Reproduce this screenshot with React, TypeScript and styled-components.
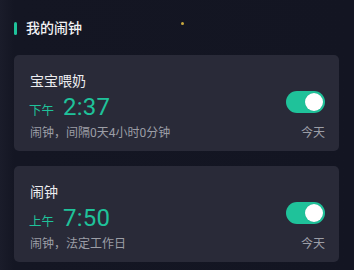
import React from "react";
import styled, { createGlobalStyle } from "styled-components";

const GlobalStyle = createGlobalStyle`
  html, body {
    margin: 0;
    padding: 0;
    background: #131522;
  }
  body {
    font-family: Roboto, "Noto Sans CJK SC", sans-serif;
    -webkit-font-smoothing: antialiased;
  }
`;

const Page = styled.div`
  width: 354px;
  height: 270px;
  overflow: hidden;
  background: linear-gradient(90deg, #1a1c2a 0px, #141623 14px, #131522 100%);
  box-sizing: border-box;
  padding: 17px 15px 0 14px;
`;

const Header = styled.div`
  position: relative;
  display: flex;
  align-items: center;
  height: 22px;
  margin-bottom: 16px;
`;

const Accent = styled.span`
  width: 3px;
  height: 13px;
  border-radius: 2px;
  background: #1fc29a;
  margin-right: 9px;
`;

const Title = styled.h2`
  margin: 0;
  font-size: 14px;
  line-height: 22px;
  font-weight: 500;
  color: #f2f2f4;
`;

const Dot = styled.span`
  position: absolute;
  left: 167px;
  top: 5px;
  width: 3px;
  height: 3px;
  border-radius: 50%;
  background: #c9a93e;
`;

const List = styled.div`
  display: flex;
  flex-direction: column;
  gap: 15px;
`;

const Card = styled.div`
  display: grid;
  grid-template-columns: 1fr auto;
  grid-template-rows: 22px 31px 18px;
  align-content: start;
  grid-template-areas:
    "name ."
    "time toggle"
    "sub day";
  height: 96px;
  box-sizing: border-box;
  padding: 15px 14px 0 16px;
  border-radius: 5px;
  background: #292a38;
`;

const Name = styled.div`
  grid-area: name;
  font-size: 14px;
  line-height: 22px;
  color: #ecedf0;
`;

const TimeRow = styled.div`
  grid-area: time;
  display: flex;
  align-items: baseline;
  margin-left: -1px;
  line-height: 30px;
  color: #1fc29a;
`;

const Period = styled.span`
  font-size: 12.5px;
  margin-right: 9px;
`;

const Clock = styled.span`
  font-size: 24px;
  font-weight: 400;
  letter-spacing: 0.2px;
`;

const Sub = styled.div`
  grid-area: sub;
  margin-top: 1px;
  font-size: 12px;
  line-height: 18px;
  color: #9c9ea6;
`;

const Day = styled.div`
  grid-area: day;
  justify-self: end;
  margin-top: 1px;
  font-size: 12px;
  line-height: 18px;
  color: #9c9ea6;
`;

const Toggle = styled.button<{ $on: boolean }>`
  grid-area: toggle;
  align-self: start;
  justify-self: end;
  position: relative;
  margin-top: -1px;
  width: 39px;
  height: 22px;
  padding: 0;
  border: none;
  border-radius: 11px;
  background: ${(p) => (p.$on ? "#1fc29a" : "#555766")};
  cursor: pointer;
`;

const Knob = styled.span<{ $on: boolean }>`
  position: absolute;
  top: 2px;
  left: ${(p) => (p.$on ? "19px" : "2px")};
  width: 18px;
  height: 18px;
  border-radius: 50%;
  background: #ffffff;
  box-shadow: 0 0 1px rgba(0, 0, 0, 0.2);
`;

type Alarm = {
  name: string;
  period: string;
  time: string;
  desc: string;
  day: string;
  on: boolean;
};

const alarms: Alarm[] = [
  { name: "宝宝喂奶", period: "下午", time: "2:37", desc: "闹钟，间隔0天4小时0分钟", day: "今天", on: true },
  { name: "闹钟", period: "上午", time: "7:50", desc: "闹钟，法定工作日", day: "今天", on: true },
];

export default function App() {
  return (
    <>
      <GlobalStyle />
      <Page>
        <Header>
          <Accent />
          <Title>我的闹钟</Title>
          <Dot />
        </Header>
        <List>
          {alarms.map((a) => (
            <Card key={a.name}>
              <Name>{a.name}</Name>
              <TimeRow>
                <Period>{a.period}</Period>
                <Clock>{a.time}</Clock>
              </TimeRow>
              <Toggle $on={a.on} aria-label="toggle">
                <Knob $on={a.on} />
              </Toggle>
              <Sub>{a.desc}</Sub>
              <Day>{a.day}</Day>
            </Card>
          ))}
        </List>
      </Page>
    </>
  );
}
